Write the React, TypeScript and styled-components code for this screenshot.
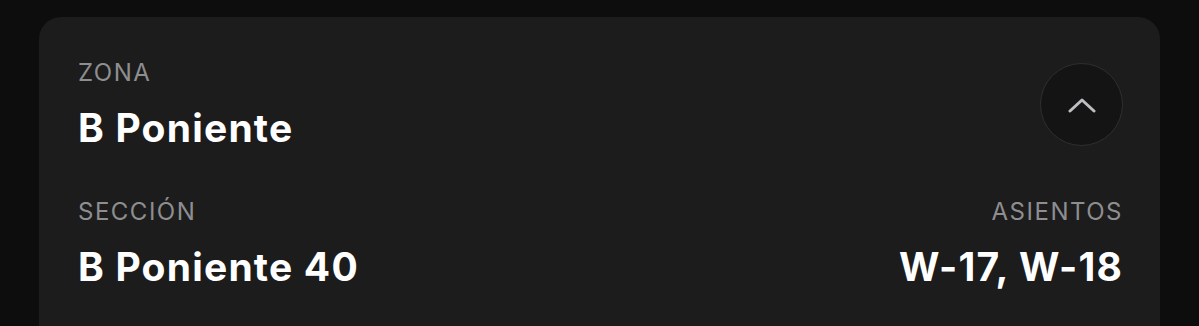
import styled, { createGlobalStyle } from "styled-components";

const GlobalStyle = createGlobalStyle`
  html, body {
    margin: 0;
    padding: 0;
    background: #0d0d0d;
    font-family: Inter, "Noto Sans", sans-serif;
    -webkit-font-smoothing: antialiased;
  }
`;

const Page = styled.div`
  width: 1199px;
  height: 326px;
  overflow: hidden;
  padding: 17px 39px 0 39px;
  box-sizing: border-box;
`;

const Card = styled.section`
  background: #1c1c1c;
  border-radius: 22px;
  padding: 42px 37px 40px 39px;
  display: flex;
  flex-direction: column;
  gap: 48px;
  height: 330px;
  box-sizing: border-box;
`;

const Row = styled.div`
  display: flex;
  justify-content: space-between;
  align-items: flex-start;
`;

const Field = styled.div<{ $align?: "left" | "right" }>`
  display: flex;
  flex-direction: column;
  gap: 18px;
  align-items: ${(p) => (p.$align === "right" ? "flex-end" : "flex-start")};
`;

const Label = styled.span`
  color: #8e8e90;
  font-size: 24px;
  line-height: 28px;
  letter-spacing: 1.5px;
  text-transform: uppercase;
`;

const Value = styled.span`
  color: #ffffff;
  font-size: 39px;
  line-height: 45px;
  font-weight: 700;
  letter-spacing: 1.2px;
`;

const ToggleButton = styled.button`
  width: 83px;
  height: 83px;
  margin-top: 4px;
  border-radius: 50%;
  border: 1.5px solid #2f2f32;
  background: #141415;
  display: flex;
  align-items: center;
  justify-content: center;
  padding: 0;
  cursor: pointer;
`;

export default function App() {
  return (
    <>
      <GlobalStyle />
      <Page>
        <Card>
          <Row>
            <Field>
              <Label>Zona</Label>
              <Value>B Poniente</Value>
            </Field>
            <ToggleButton aria-label="Contraer">
              <svg width="28" height="16" viewBox="0 0 28 16" fill="none">
                <path
                  d="M2 14 L14 3 L26 14"
                  stroke="#bebec0"
                  strokeWidth="3"
                  strokeLinecap="round"
                  strokeLinejoin="round"
                />
              </svg>
            </ToggleButton>
          </Row>
          <Row>
            <Field>
              <Label>Sección</Label>
              <Value>B Poniente 40</Value>
            </Field>
            <Field $align="right">
              <Label>Asientos</Label>
              <Value>W-17, W-18</Value>
            </Field>
          </Row>
        </Card>
      </Page>
    </>
  );
}
